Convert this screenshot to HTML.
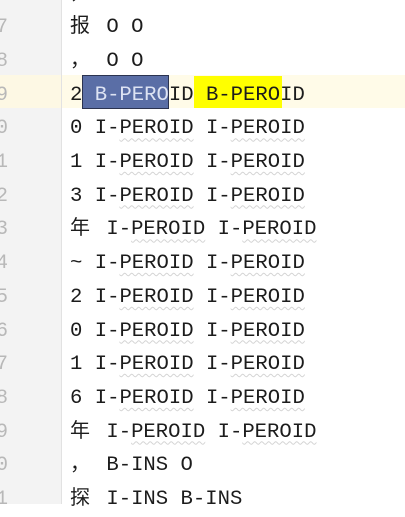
<!DOCTYPE html>
<html><head><meta charset="utf-8"><style>
html,body{margin:0;padding:0;width:405px;height:504px;overflow:hidden;background:#fff}
.g{position:absolute;left:0;top:0;width:61px;height:504px;background:#f3f3f3;border-right:1px solid #e2e2e2}
.hl{position:absolute;left:0;top:75px;width:405px;height:33px;background:#fffbe8}
.sel{position:absolute;left:82px;top:75px;width:85px;height:32px;background:#5a6ea6;border:1px solid #2b3350}
.yel{position:absolute;left:194px;top:76px;width:88px;height:32px;background:#ffff00}
.ln{position:absolute;left:-30px;width:38px;text-align:right;font:20px "Liberation Mono",monospace;color:#b8b8b8;line-height:33.7px}
.tx{position:absolute;left:70px;height:33.7px;font:20.6px "Liberation Mono",monospace;color:#1c1c1c;line-height:33.7px;white-space:pre}
.c{display:inline-block;width:24px;font-family:"Noto Sans CJK SC",sans-serif;font-size:20px;line-height:0;vertical-align:baseline}
.w{ text-decoration:underline wavy #d4d4d4; text-decoration-thickness:1px;text-underline-offset:4px}
</style></head><body>
<div class="g"></div>
<div class="hl"></div>
<div class="g" style="top:75px;height:33px;background:#fdf8e4"></div>
<div class="sel"></div>
<div class="yel"></div>
<div id="c"></div>
<script>
var rows=[[6,"<span class='c'>，</span>"],[7,"<span class='c'>报</span> O O"],[8,"<span class='c'>，</span> O O"],[9,"2 <span style='color:#dde3f3'>B-PERO</span>ID B-PEROID"],
[0,"0 I-<span class='w'>PEROID</span> I-<span class='w'>PEROID</span>"],[1,"1 I-<span class='w'>PEROID</span> I-<span class='w'>PEROID</span>"],[2,"3 I-<span class='w'>PEROID</span> I-<span class='w'>PEROID</span>"],
[3,"<span class='c'>年</span> I-<span class='w'>PEROID</span> I-<span class='w'>PEROID</span>"],[4,"~ I-<span class='w'>PEROID</span> I-<span class='w'>PEROID</span>"],[5,"2 I-<span class='w'>PEROID</span> I-<span class='w'>PEROID</span>"],
[6,"0 I-<span class='w'>PEROID</span> I-<span class='w'>PEROID</span>"],[7,"1 I-<span class='w'>PEROID</span> I-<span class='w'>PEROID</span>"],[8,"6 I-<span class='w'>PEROID</span> I-<span class='w'>PEROID</span>"],
[9,"<span class='c'>年</span> I-<span class='w'>PEROID</span> I-<span class='w'>PEROID</span>"],[0,"<span class='c'>，</span> B-INS O"],[1,"<span class='c'>探</span> I-INS B-INS"]];
var h="";for(var i=0;i<rows.length;i++){var t=-22.5+i*33.7;
h+="<div class='ln' style='top:"+t+"px'>"+rows[i][0]+"</div><div class='tx' style='top:"+t+"px'>"+rows[i][1]+"</div>";}
document.getElementById("c").innerHTML=h;
</script>
</body></html>
